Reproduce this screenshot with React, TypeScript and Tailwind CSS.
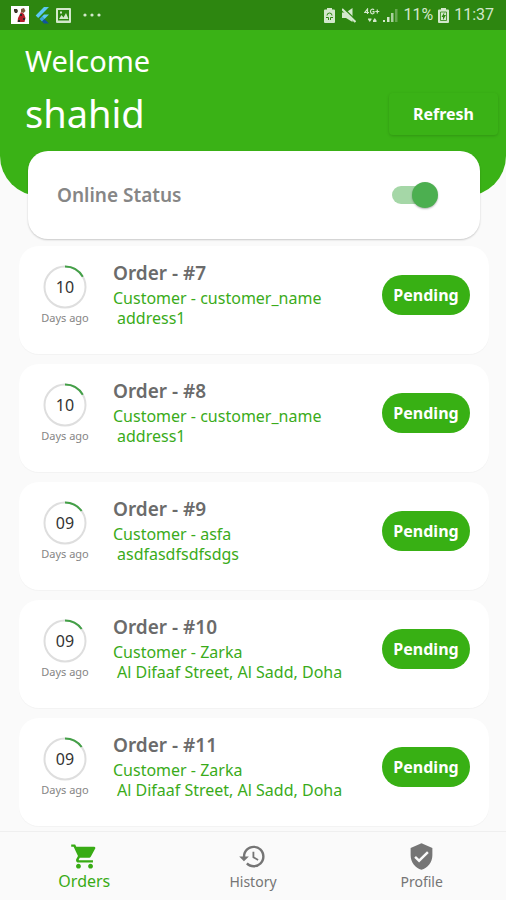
import React, { useState } from 'react';
import { MdHistory, MdShoppingCart, MdVerifiedUser } from 'react-icons/md';

interface Order {
  id: number;
  days: number;
  customer: string;
  address: string;
}

const orders: Order[] = [
  { id: 7, days: 10, customer: 'customer_name', address: 'address1' },
  { id: 8, days: 10, customer: 'customer_name', address: 'address1' },
  { id: 9, days: 9, customer: 'asfa', address: 'asdfasdfsdfsdgs' },
  { id: 10, days: 9, customer: 'Zarka', address: 'Al Difaaf Street, Al Sadd, Doha' },
  { id: 11, days: 9, customer: 'Zarka', address: 'Al Difaaf Street, Al Sadd, Doha' },
];

const tabs = [
  { name: 'Orders', icon: MdShoppingCart },
  { name: 'History', icon: MdHistory },
  { name: 'Profile', icon: MdVerifiedUser },
];

function StatusBar() {
  return (
    <div className="flex h-[30px] items-center justify-between bg-[#2d8610] pl-[11px] pr-3 text-[#d3e8cc]">
      <div className="flex items-center">
        {/* game notification */}
        <svg className="h-[18px] w-[18px]" viewBox="0 0 18 18">
          <path fill="#fff" d="M0 0h18v18H0z" />
          <path fill="#3c3428" d="M3 3h3l1 2-1 2H4L3 5z" />
          <path fill="#7a5a3a" d="M10 3l3-1 1.500 3-2 2-2.500-1z" />
          <path fill="#b5202c" d="M10 6l3 2 1.500 4-1 4H6.500l.5-4 1.500-3z" />
          <path fill="#2b2b2b" d="M9 8h2v2H9zM12 12h2v2h-2zM7 14h2v2H7z" />
        </svg>
        {/* flutter */}
        <svg className="ml-1.5 h-[18px] w-[14px]" viewBox="0 0 14 18">
          <path fill="#5cc8f4" d="M9 1h5L3.200 12 .7 9.500z" />
          <path fill="#5cc8f4" d="M9 8.500h5L9.500 13 7 10.500z" />
          <path fill="#3ba6e0" d="M4.500 13L7 10.500 9.500 13 7 15.500z" />
          <path fill="#10539c" d="M7 15.500L9.500 13l4.500 4.500H9z" />
        </svg>
        {/* picture */}
        <svg className="ml-[7px] h-[15px] w-[15px]" viewBox="0 0 15 15">
          <path
            fill="currentColor"
            fillRule="evenodd"
            d="M1 0h13a1 1 0 0 1 1 1v13a1 1 0 0 1-1 1H1a1 1 0 0 1-1-1V1a1 1 0 0 1 1-1zm1 2v10.500h11V2zm1 9l2.500-4 2 2.500L10 5l2.500 6zM4 3.500h2v2H4z"
          />
        </svg>
        <svg className="ml-3 h-1 w-[18px]" viewBox="0 0 18 4">
          <g fill="currentColor">
            <circle cx="2" cy="2" r="1.600" />
            <circle cx="9" cy="2" r="1.600" />
            <circle cx="16" cy="2" r="1.600" />
          </g>
        </svg>
      </div>

      <div className="flex items-center font-[Roboto,sans-serif] text-base leading-none">
        {/* battery saver */}
        <svg className="h-[15px] w-[11px]" viewBox="0 0 11 15">
          <path fill="currentColor" d="M3 0h5v1.500h2A1 1 0 0 1 11 2.500V14a1 1 0 0 1-1 1H1a1 1 0 0 1-1-1V2.500a1 1 0 0 1 1-1h2z" />
          <path
            fill="none"
            stroke="#2d8610"
            d="M3 7.500a2.500 2.500 0 0 1 5 0M2 9.500h2.500V12M9 9.500H6.500V12"
          />
        </svg>
        {/* muted */}
        <svg className="ml-[7px] h-[15px] w-[14px]" viewBox="0 0 14 15">
          <path fill="currentColor" d="M0 4.500h4L10.500 0v14L4 10H0z" />
          <path stroke="#2d8610" strokeWidth="1.400" d="M1.500 0L14.500 13" />
          <path stroke="currentColor" strokeWidth="2.200" d="M0 1l13.500 13" />
        </svg>
        {/* 4G+ data arrows */}
        <svg className="ml-2 h-[14px] w-4" viewBox="0 0 16 14">
          <path
            fill="none"
            stroke="currentColor"
            strokeWidth="1.200"
            d="M3.500 6V1L.8 4.500H5M10 2C9 .5 6.500 1 6.500 3.500S9 6.500 10 5V3.700H8.500M13.300 1.500v4M11.300 3.500h4"
          />
          <path fill="currentColor" d="M4 10.500h3.500v1L5.800 14 4 11.500zM9 14v-1.500l1.800-2.500 1.700 2.500V14z" />
        </svg>
        {/* signal */}
        <svg className="ml-[3px] h-[14px] w-[15px]" viewBox="0 0 15 14">
          <path fill="currentColor" d="M0 12h2v2H0zM4 9h2.500v5H4z" />
          <path fill="currentColor" opacity=".75" d="M8 5h2.500v9H8z" />
          <path fill="currentColor" opacity=".35" d="M12 1h2.500v13H12z" />
        </svg>
        <span className="ml-[5px]">11%</span>
        {/* charging battery */}
        <svg className="ml-[5px] h-[15px] w-[11px]" viewBox="0 0 11 15">
          <path fill="currentColor" d="M3 0h5v1.500h2A1 1 0 0 1 11 2.500V14a1 1 0 0 1-1 1H1a1 1 0 0 1-1-1V2.500a1 1 0 0 1 1-1h2z" />
          <path fill="none" stroke="#2d8610" strokeWidth=".8" d="M2.500 4h6v8.500h-6z" />
          <path fill="#2d8610" d="M6.500 4L3.500 9H5v3l3-5H6z" />
        </svg>
        <span className="ml-[5px]">11:37</span>
      </div>
    </div>
  );
}

function DaysRing({ days }: { days: number }) {
  return (
    <div className="flex w-[54px] flex-col items-center">
      <div className="grid h-11 w-11 place-items-center">
        <svg className="col-start-1 row-start-1 h-11 w-11 -rotate-90" viewBox="0 0 44 44">
          <circle cx="22" cy="22" r="20.500" fill="none" stroke="#dedede" strokeWidth="2" />
          <circle
            cx="22"
            cy="22"
            r="20.500"
            fill="none"
            stroke="#43a047"
            strokeWidth="2"
            pathLength="60"
            strokeDasharray={`${days} 60`}
          />
        </svg>
        <span className="col-start-1 row-start-1 text-base text-[#333]">{String(days).padStart(2, '0')}</span>
      </div>
      <span className="whitespace-nowrap text-[11px] leading-[18px] text-[#858585]">Days ago</span>
    </div>
  );
}

function OrderCard({ order }: { order: Order }) {
  return (
    <li className="flex h-[108px] items-start rounded-[20px] bg-white px-[19px] shadow-[0_1px_1px_rgba(0,0,0,0.03)]">
      <div className="pt-[19px]">
        <DaysRing days={order.days} />
      </div>
      <div className="ml-[21px] min-w-0 flex-1 pt-[15px]">
        <h2 className="text-[19px] font-semibold leading-6 text-[#6b6b6b]">Order - #{order.id}</h2>
        <p className="pt-[3px] text-base leading-5 text-[#3aab1a]">Customer - {order.customer}</p>
        <p className="whitespace-nowrap pl-1 text-base leading-5 text-[#3aab1a]">{order.address}</p>
      </div>
      <button type="button" className="mt-[29px] h-10 w-[88px] rounded-full bg-[#38b014] text-base font-bold text-white">
        Pending
      </button>
    </li>
  );
}

export default function App() {
  const [online, setOnline] = useState(true);
  const [active, setActive] = useState('Orders');

  return (
    <div className="flex min-h-screen flex-col bg-[#fafafa] font-['Noto_Sans','Open_Sans',sans-serif]">
      <StatusBar />

      <header className="flex items-end justify-between rounded-b-[40px] bg-[#3ab216] pb-[59px] pl-[25px] pr-2 text-white">
        <div className="pt-[11px]">
          <p className="text-[29px] leading-10">Welcome</p>
          <h1 className="pt-2 text-[38px] leading-[48px]">shahid</h1>
        </div>
        <button
          type="button"
          className="mb-0.5 h-[42px] w-[109px] rounded-sm text-base font-bold shadow-[0_1px_3px_rgba(0,0,0,0.16)]"
        >
          Refresh
        </button>
      </header>

      <main className="flex-1">
        <label className="-mt-[45px] ml-7 mr-[26px] flex h-[88px] items-center justify-between rounded-[20px] bg-white pl-[29px] pr-[42px] shadow-[0_1px_2px_rgba(0,0,0,0.2)]">
          <span className="text-[19px] font-semibold text-[#868686]">Online Status</span>
          <span className="relative flex h-[26px] w-[46px] items-center">
            <input
              type="checkbox"
              role="switch"
              checked={online}
              onChange={e => setOnline(e.target.checked)}
              className="peer h-[18px] w-[42px] appearance-none rounded-full bg-[#bdbdbd] checked:bg-[#a5d7a7]"
            />
            <span className="pointer-events-none absolute left-0 h-[26px] w-[26px] rounded-full bg-[#f1f1f1] shadow-[0_1px_2px_rgba(0,0,0,0.3)] peer-checked:left-5 peer-checked:bg-[#4caf50]" />
          </span>
        </label>

        <ul className="flex flex-col gap-2.5 pb-[5px] pl-[19px] pr-[17px] pt-[7px]">
          {orders.map(order => (
            <OrderCard key={order.id} order={order} />
          ))}
        </ul>
      </main>

      <nav className="grid h-[69px] grid-cols-3 border-t border-[#efefef] bg-[#fafafa]">
        {tabs.map(({ name, icon: Icon }) => (
          <button
            key={name}
            type="button"
            onClick={() => setActive(name)}
            className={
              active === name
                ? 'flex flex-col items-center pt-2.5 text-base leading-5 text-[#38ab14]'
                : 'flex flex-col items-center pt-2.5 text-sm leading-[22px] text-[#757575]'
            }
          >
            <Icon className="h-[29px] w-[29px]" />
            {name}
          </button>
        ))}
      </nav>
    </div>
  );
}
